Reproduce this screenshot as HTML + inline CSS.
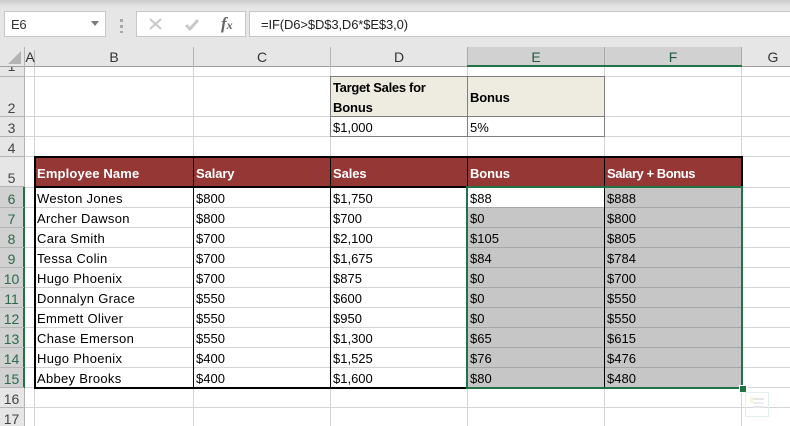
<!DOCTYPE html>
<html><head><meta charset="utf-8">
<style>
html,body{margin:0;padding:0;width:790px;height:426px;overflow:hidden;background:#fff}
#p{position:relative;width:790px;height:426px;overflow:hidden;font-family:"Liberation Sans",sans-serif;font-size:13px;color:#000}
#p div{position:absolute}
.h{background:#d4d4d4;height:1px;left:25px;width:765px}
.v{background:#d4d4d4;width:1px;top:67px;height:359px}
.t{white-space:nowrap;height:20px;line-height:20px;letter-spacing:0}
.m{letter-spacing:.3px}
.b{font-weight:bold;letter-spacing:-.15px}
.w{color:#fff;font-weight:bold;letter-spacing:-.1px}
.c{top:47px;height:18px;line-height:21px;text-align:center;color:#333;font-size:14px}
.r{left:0;width:23px;text-align:center;color:#444;height:20px;line-height:22px;font-size:14px}
.s{color:#2c6a4a}
.rh{left:0;width:24px;height:1px;background:#b4b4b4}
.k{background:#000}
.g{background:#a6a6a6;left:468px;width:273px;height:1px}
.box{background:#fff;border:1px solid #c6c6c6;box-sizing:border-box}
</style></head><body><div id="p">
<div style="left:0;top:0;width:790px;height:47px;background:linear-gradient(#c9c9c9 0,#e0e0e0 5px,#e6e6e6 9px)"></div>
<div class="box" style="left:4px;top:11px;width:102px;height:26px;border-width:1.5px"></div>
<div class="t" style="left:11px;top:15px;letter-spacing:-.3px;color:#333">E6</div>
<div style="left:91px;top:21px;width:0;height:0;border-left:4.5px solid transparent;border-right:4.5px solid transparent;border-top:5px solid #7a7a7a"></div>
<div style="left:120px;top:19px;width:3px;height:3px;background:#a8a8a8"></div>
<div style="left:120px;top:25px;width:3px;height:3px;background:#a8a8a8"></div>
<div style="left:120px;top:31px;width:3px;height:2px;background:#a8a8a8"></div>
<div class="box" style="left:136px;top:11px;width:110px;height:26px;border-width:1.5px"></div>
<svg style="position:absolute;left:148px;top:17px" width="16" height="14"><path d="M2 2L13 12M13 2L2 12" stroke="#c8c8c8" stroke-width="2" fill="none"/></svg>
<svg style="position:absolute;left:184px;top:17px" width="16" height="14"><path d="M2 8L6 12L14 3" stroke="#c8c8c8" stroke-width="3" fill="none"/></svg>
<div class="t" style="left:221px;top:14px;font-family:'Liberation Serif',serif;font-style:italic;font-weight:bold;letter-spacing:0;font-size:17px;color:#666">f<span style="font-size:12px">x</span></div>
<div class="box" style="left:249px;top:11px;width:545px;height:26px;border-width:1.5px"></div>
<div class="t" style="left:261px;top:15px;letter-spacing:-.12px;color:#222">=IF(D6&gt;$D$3,D6*$E$3,0)</div>

<div style="left:0;top:47px;width:790px;height:19px;background:#e6e6e6"></div>
<div style="left:0;top:66px;width:790px;height:1px;background:#a0a0a0"></div>
<div style="left:467px;top:47px;width:275px;height:18px;background:#d1d1d1"></div>
<div style="left:467px;top:65px;width:275px;height:2px;background:#217346"></div>
<svg style="position:absolute;left:8px;top:50px" width="14" height="14"><path d="M13 1V14H0Z" fill="#b4b4b4"/></svg>
<div style="left:24px;top:47px;width:1px;height:20px;background:#b4b4b4"></div>
<div style="left:34px;top:50px;width:1px;height:17px;background:#b4b4b4"></div>
<div style="left:193px;top:47px;width:1px;height:20px;background:#b4b4b4"></div>
<div style="left:330px;top:47px;width:1px;height:20px;background:#b4b4b4"></div>
<div style="left:467px;top:47px;width:1px;height:18px;background:#aaa"></div>
<div style="left:604px;top:47px;width:1px;height:18px;background:#aaa"></div>
<div style="left:741px;top:47px;width:1px;height:18px;background:#aaa"></div>
<div class="c" style="left:25px;width:10px">A</div>
<div class="c" style="left:35px;width:158px">B</div>
<div class="c" style="left:194px;width:136px">C</div>
<div class="c" style="left:331px;width:136px">D</div>
<div class="c" style="left:468px;width:136px;color:#1e5b3c">E</div>
<div class="c" style="left:605px;width:136px;color:#1e5b3c">F</div>
<div class="c" style="left:742px;width:62px">G</div>

<div class="v" style="left:34px"></div><div class="v" style="left:193px"></div><div class="v" style="left:330px"></div><div class="v" style="left:467px"></div><div class="v" style="left:604px"></div><div class="v" style="left:741px"></div>
<div class="h" style="top:76px"></div><div class="h" style="top:116px"></div><div class="h" style="top:136px"></div><div class="h" style="top:156px"></div><div class="h" style="top:187px"></div><div class="h" style="top:207px"></div><div class="h" style="top:227px"></div><div class="h" style="top:247px"></div><div class="h" style="top:267px"></div><div class="h" style="top:287px"></div><div class="h" style="top:307px"></div><div class="h" style="top:327px"></div><div class="h" style="top:347px"></div><div class="h" style="top:367px"></div><div class="h" style="top:387px"></div><div class="h" style="top:407px"></div>

<div style="left:0;top:67px;width:24px;height:359px;background:#e6e6e6"></div>
<div style="left:0;top:187px;width:23px;height:200px;background:#d1d1d1"></div>
<div style="left:23px;top:187px;width:2px;height:201px;background:#217346"></div>
<div style="left:24px;top:67px;width:1px;height:120px;background:#b4b4b4"></div>
<div style="left:24px;top:388px;width:1px;height:38px;background:#b4b4b4"></div>
<div class="rh" style="top:76px"></div><div class="rh" style="top:116px"></div><div class="rh" style="top:136px"></div><div class="rh" style="top:156px"></div><div class="rh" style="top:186px"></div><div class="rh" style="top:207px"></div><div class="rh" style="top:227px"></div><div class="rh" style="top:247px"></div><div class="rh" style="top:267px"></div><div class="rh" style="top:287px"></div><div class="rh" style="top:307px"></div><div class="rh" style="top:327px"></div><div class="rh" style="top:347px"></div><div class="rh" style="top:367px"></div><div class="rh" style="top:387px"></div><div class="rh" style="top:407px"></div>
<div style="left:0;top:67px;width:24px;height:9px;overflow:hidden"><div class="r" style="top:-11px;line-height:20px">1</div></div>
<div class="r" style="top:97px">2</div><div class="r" style="top:117px">3</div><div class="r" style="top:137px">4</div><div class="r" style="top:167px">5</div>
<div class="r s" style="top:188px">6</div><div class="r s" style="top:208px">7</div><div class="r s" style="top:228px">8</div><div class="r s" style="top:248px">9</div><div class="r s" style="top:268px">10</div><div class="r s" style="top:288px">11</div><div class="r s" style="top:308px">12</div><div class="r s" style="top:328px">13</div><div class="r s" style="top:348px">14</div><div class="r s" style="top:368px">15</div>
<div class="r" style="top:388px">16</div><div class="r" style="top:408px">17</div>

<div style="left:331px;top:77px;width:273px;height:39px;background:#eeece1"></div>
<div style="left:330px;top:76px;width:275px;height:1px;background:#7f7f7f"></div>
<div style="left:330px;top:116px;width:275px;height:1px;background:#7f7f7f"></div>
<div style="left:330px;top:136px;width:275px;height:1px;background:#7f7f7f"></div>
<div style="left:330px;top:76px;width:1px;height:61px;background:#7f7f7f"></div>
<div style="left:467px;top:76px;width:1px;height:61px;background:#7f7f7f"></div>
<div style="left:604px;top:76px;width:1px;height:61px;background:#7f7f7f"></div>
<div class="t b" style="left:333px;top:78px;letter-spacing:-.3px">Target Sales for</div>
<div class="t b" style="left:333px;top:98px">Bonus</div>
<div class="t b" style="left:470px;top:88px">Bonus</div>
<div class="t" style="left:333px;top:118px">$1,000</div>
<div class="t" style="left:470px;top:118px">5%</div>

<div style="left:34px;top:158px;width:707px;height:28px;background:#953735"></div>
<div style="left:468px;top:188px;width:273px;height:199px;background:#c6c6c6"></div>
<div style="left:468px;top:188px;width:136px;height:19px;background:#fff"></div>
<div class="g" style="top:207px"></div><div class="g" style="top:227px"></div><div class="g" style="top:247px"></div><div class="g" style="top:267px"></div><div class="g" style="top:287px"></div><div class="g" style="top:307px"></div><div class="g" style="top:327px"></div><div class="g" style="top:347px"></div><div class="g" style="top:367px"></div>

<div class="k" style="left:34px;top:156px;width:709px;height:2px"></div>
<div class="k" style="left:34px;top:186px;width:709px;height:2px"></div>
<div class="k" style="left:34px;top:387px;width:433px;height:2px"></div>
<div class="k" style="left:34px;top:156px;width:2px;height:233px"></div>
<div class="k" style="left:193px;top:156px;width:1px;height:233px"></div>
<div class="k" style="left:330px;top:156px;width:1px;height:233px"></div>
<div class="k" style="left:467px;top:156px;width:1px;height:31px"></div>
<div class="k" style="left:604px;top:156px;width:1px;height:233px"></div>
<div class="k" style="left:741px;top:156px;width:2px;height:31px"></div>

<div style="left:466px;top:186px;width:277px;height:2px;background:#217346"></div>
<div style="left:466px;top:387px;width:277px;height:2px;background:#217346"></div>
<div style="left:466px;top:186px;width:2px;height:203px;background:#217346"></div>
<div style="left:741px;top:186px;width:2px;height:203px;background:#217346"></div>
<div style="left:739px;top:385px;width:6px;height:6px;background:#217346;border:1px solid #fff"></div>

<div style="left:745px;top:392px;width:22px;height:23px;border:1px solid #e4eeea;box-sizing:content-box"></div>
<div style="left:753px;top:398px;width:11px;height:2px;background:#e6e6e6"></div>
<div style="left:753px;top:402px;width:11px;height:2px;background:#e8eef2"></div>
<div style="left:753px;top:406px;width:11px;height:2px;background:#e6e6e6"></div>
<div style="left:750px;top:397px;width:3px;height:6px;background:#fbf3e0"></div>

<div class="t w" style="left:37px;top:164px;letter-spacing:.15px">Employee Name</div><div class="t w" style="left:196px;top:164px">Salary</div><div class="t w" style="left:333px;top:164px">Sales</div><div class="t w" style="left:470px;top:164px">Bonus</div><div class="t w" style="left:607px;top:164px;letter-spacing:-.45px">Salary + Bonus</div>

<div class="t m" style="left:37px;top:189px">Weston Jones</div><div class="t" style="left:196px;top:189px">$800</div><div class="t" style="left:333px;top:189px">$1,750</div><div class="t" style="left:470px;top:189px">$88</div><div class="t" style="left:607px;top:189px">$888</div>
<div class="t m" style="left:37px;top:209px">Archer Dawson</div><div class="t" style="left:196px;top:209px">$800</div><div class="t" style="left:333px;top:209px">$700</div><div class="t" style="left:470px;top:209px">$0</div><div class="t" style="left:607px;top:209px">$800</div>
<div class="t m" style="left:37px;top:229px">Cara Smith</div><div class="t" style="left:196px;top:229px">$700</div><div class="t" style="left:333px;top:229px">$2,100</div><div class="t" style="left:470px;top:229px">$105</div><div class="t" style="left:607px;top:229px">$805</div>
<div class="t m" style="left:37px;top:249px">Tessa Colin</div><div class="t" style="left:196px;top:249px">$700</div><div class="t" style="left:333px;top:249px">$1,675</div><div class="t" style="left:470px;top:249px">$84</div><div class="t" style="left:607px;top:249px">$784</div>
<div class="t m" style="left:37px;top:269px">Hugo Phoenix</div><div class="t" style="left:196px;top:269px">$700</div><div class="t" style="left:333px;top:269px">$875</div><div class="t" style="left:470px;top:269px">$0</div><div class="t" style="left:607px;top:269px">$700</div>
<div class="t m" style="left:37px;top:289px">Donnalyn Grace</div><div class="t" style="left:196px;top:289px">$550</div><div class="t" style="left:333px;top:289px">$600</div><div class="t" style="left:470px;top:289px">$0</div><div class="t" style="left:607px;top:289px">$550</div>
<div class="t m" style="left:37px;top:309px">Emmett Oliver</div><div class="t" style="left:196px;top:309px">$550</div><div class="t" style="left:333px;top:309px">$950</div><div class="t" style="left:470px;top:309px">$0</div><div class="t" style="left:607px;top:309px">$550</div>
<div class="t m" style="left:37px;top:329px">Chase Emerson</div><div class="t" style="left:196px;top:329px">$550</div><div class="t" style="left:333px;top:329px">$1,300</div><div class="t" style="left:470px;top:329px">$65</div><div class="t" style="left:607px;top:329px">$615</div>
<div class="t m" style="left:37px;top:349px">Hugo Phoenix</div><div class="t" style="left:196px;top:349px">$400</div><div class="t" style="left:333px;top:349px">$1,525</div><div class="t" style="left:470px;top:349px">$76</div><div class="t" style="left:607px;top:349px">$476</div>
<div class="t m" style="left:37px;top:369px">Abbey Brooks</div><div class="t" style="left:196px;top:369px">$400</div><div class="t" style="left:333px;top:369px">$1,600</div><div class="t" style="left:470px;top:369px">$80</div><div class="t" style="left:607px;top:369px">$480</div>
</div></body></html>
